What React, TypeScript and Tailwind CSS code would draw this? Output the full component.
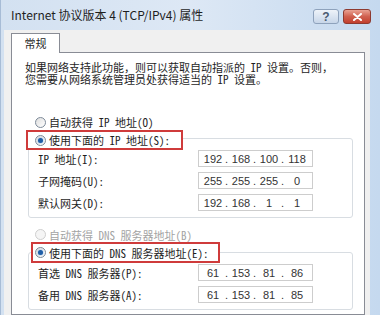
import React from 'react';

function Radio({ checked = false, disabled = false }: { checked?: boolean; disabled?: boolean }) {
  return (
    <span
      className={`w-[11px] h-[11px] rounded-full border flex items-center justify-center shrink-0 ${
        disabled ? 'border-[#cfcfcf] bg-[#f5f5f5]' : 'border-[#7d8a99] bg-gradient-to-br from-[#dedede] to-white'
      }`}
    >
      {checked && <span className="w-[5px] h-[5px] rounded-full bg-[#1f5da6] shadow-[0_0_2px_#6aa6e6]" />}
    </span>
  );
}

function IpBox({ parts }: { parts: string[] }) {
  return (
    <div className="w-[115px] h-[17px] border border-[#cdcdcd] bg-white flex items-center pl-[2px] font-[family-name:Liberation_Sans,Arial,sans-serif] text-[11px] text-[#333]">
      {parts.map((p, i) => (
        <React.Fragment key={i}>
          {i > 0 && <span className="w-[4px] text-left">.</span>}
          <span className="w-[24px] text-center">{p}</span>
        </React.Fragment>
      ))}
    </div>
  );
}

function Field({ label, parts }: { label: string; parts: string[] }) {
  return (
    <div className="h-[17px] flex items-center">
      <span className="w-[160px] whitespace-nowrap">{label}</span>
      <IpBox parts={parts} />
    </div>
  );
}

export default function App() {
  return (
    <div className="w-[380px] h-[315px] overflow-hidden flex flex-col bg-gradient-to-r from-[#d3e1f1] via-[#dde8f5] to-[#c5d9ef] border-l border-[#a7bcd6]">
      {/* title bar */}
      <div className="h-[30px] shrink-0 flex pl-[10px] pr-[9px]">
        <span className="self-center text-[12px] text-[#1e1e1e] font-[family-name:Noto_Sans_CJK_SC,sans-serif] whitespace-nowrap">
          Internet 协议版本 4 (TCP/IPv4) 属性
        </span>
        <div className="ml-auto mt-[9px] flex gap-[4px]">
          <div className="w-[26px] h-[15px] rounded-[3px] border border-[#8ea2bc] bg-gradient-to-b from-[#eef3f9] to-[#c7d6e9] flex items-center justify-center text-[12px] font-bold leading-none text-[#4a5a70] font-[family-name:Liberation_Sans,sans-serif]">
            ?
          </div>
          <div className="w-[28px] h-[15px] rounded-[3px] border border-[#8e3a30] bg-gradient-to-b from-[#e9a294] via-[#d0604f] to-[#c23f2e] flex items-center justify-center">
            <svg width="9" height="8" viewBox="0 0 9 8">
              <path d="M1 1L8 7M8 1L1 7" stroke="white" strokeWidth="2" strokeLinecap="round" />
            </svg>
          </div>
        </div>
      </div>

      {/* client area */}
      <div className="flex-1 ml-[3px] mr-[10px] bg-[#f0f0f0] pl-[7px] pr-[5px] pt-[3px] flex flex-col font-[family-name:Noto_Sans_Mono_CJK_SC,Noto_Sans_CJK_SC,sans-serif]">
        <div className="relative z-10 w-[49px] h-[20px] -mb-[1px] border border-b-0 border-[#898c95] bg-white flex items-center justify-center text-[11px] text-[#1e1e1e]">
          常规
        </div>

        <div className="flex-1 border border-[#898c95] bg-white pl-[13px] pt-[8px] text-[11px] leading-[12px] text-[#1e1e1e]">
          <p className="whitespace-nowrap">
            如果网络支持此功能，则可以获取自动指派的 IP 设置。否则，
            <br />
            您需要从网络系统管理员处获得适当的 IP 设置。
          </p>

          <div className="mt-[29px] h-[16px] ml-[10px] flex items-center gap-[3px]">
            <Radio />
            <span>自动获得 IP 地址(O)</span>
          </div>
          <div className="relative z-10 ml-[1px] w-[157px] h-[20px] border-2 border-[#cf3b3b] bg-white flex items-center pl-[7px] gap-[3px]">
            <Radio checked />
            <span className="whitespace-nowrap">使用下面的 IP 地址(S):</span>
          </div>
          <div className="-mt-[12px] ml-[3px] w-[325px] border border-[#d8dde2] rounded-[3px] pt-[11px] pb-[6px] pl-[9px] flex flex-col gap-[5px]">
            <Field label="IP 地址(I):" parts={['192', '168', '100', '118']} />
            <Field label="子网掩码(U):" parts={['255', '255', '255', '0']} />
            <Field label="默认网关(D):" parts={['192', '168', '1', '1']} />
          </div>

          <div className="mt-[9px] h-[15px] ml-[10px] flex items-center gap-[3px] text-[#a3a3a3]">
            <Radio disabled />
            <span>自动获得 DNS 服务器地址(B)</span>
          </div>
          <div className="relative z-10 ml-[6px] w-[189px] h-[21px] border-2 border-[#cf3b3b] bg-white flex items-center pl-[2px] gap-[3px]">
            <Radio checked />
            <span className="whitespace-nowrap">使用下面的 DNS 服务器地址(E):</span>
          </div>
          <div className="-mt-[11px] ml-[3px] w-[325px] border border-[#d8dde2] rounded-[3px] pt-[11px] pb-[6px] pl-[9px] flex flex-col gap-[5px]">
            <Field label="首选 DNS 服务器(P):" parts={['61', '153', '81', '86']} />
            <Field label="备用 DNS 服务器(A):" parts={['61', '153', '81', '85']} />
          </div>
        </div>
      </div>
    </div>
  );
}
